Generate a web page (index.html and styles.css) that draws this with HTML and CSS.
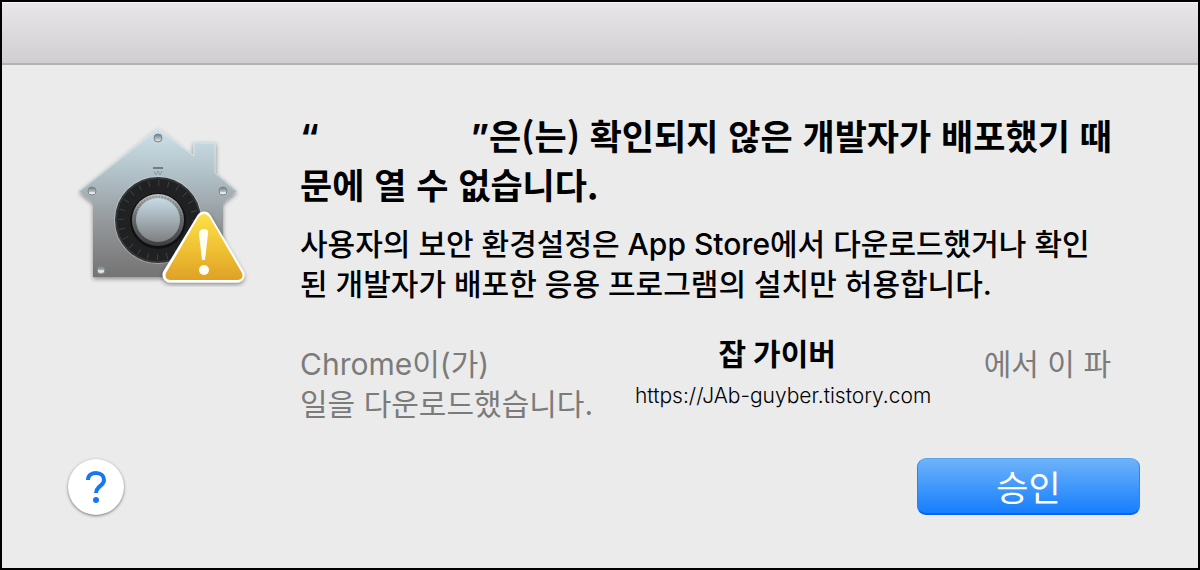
FILE: index.html
```html
<!DOCTYPE html>
<html lang="ko">
<head>
    <meta charset="UTF-8">
    <meta name="viewport" content="width=device-width, initial-scale=1.0">
    <title>승인</title>
    <link rel="stylesheet" href="styles.css">
</head>
<body>

<div class="dialog">
    <div class="titlebar"></div>

    <div class="content">
        <svg class="icon" width="184" height="180" viewBox="0 0 184 180" aria-hidden="true">
            <defs>
                <linearGradient id="house" x1="0" y1="0" x2="0" y2="1">
                    <stop offset="0" stop-color="#cfe3ea"/>
                    <stop offset="0.35" stop-color="#adbcc3"/>
                    <stop offset="0.65" stop-color="#929699"/>
                    <stop offset="1" stop-color="#757373"/>
                </linearGradient>
                <linearGradient id="knob" x1="0" y1="0" x2="0" y2="1">
                    <stop offset="0" stop-color="#c5dbe5"/>
                    <stop offset="0.5" stop-color="#a3aeb4"/>
                    <stop offset="1" stop-color="#7f7f80"/>
                </linearGradient>
                <linearGradient id="rim" x1="0" y1="0" x2="0" y2="1">
                    <stop offset="0" stop-color="#eef4f6"/>
                    <stop offset="0.4" stop-color="#8b9397"/>
                    <stop offset="1" stop-color="#484848"/>
                </linearGradient>
                <linearGradient id="warn" x1="0" y1="0" x2="0" y2="1">
                    <stop offset="0" stop-color="#fbe04a"/>
                    <stop offset="0.5" stop-color="#f0c334"/>
                    <stop offset="1" stop-color="#dfa126"/>
                </linearGradient>
                <linearGradient id="screw" x1="0" y1="0" x2="0" y2="1">
                    <stop offset="0" stop-color="#70797d"/>
                    <stop offset="0.5" stop-color="#a9b3b7"/>
                    <stop offset="1" stop-color="#f2f5f6"/>
                </linearGradient>
                <filter id="shadow" x="-20%" y="-20%" width="140%" height="140%">
                    <feDropShadow dx="0" dy="2" stdDeviation="2" flood-opacity="0.4"/>
                </filter>
            </defs>

            <!-- house plate -->
            <path d="M90 10L125 37V25Q125 24 126 24H147Q148 24 148 25V55L169 73L155 85V159H25V85L11 73Z" fill="url(#house)" filter="url(#shadow)"/>
            <path d="M12 73L90 11L126 38V25H147V55L168 73" fill="none" stroke="#e4f0f4" stroke-opacity="0.6"/>
            <g stroke="#7b8589">
                <circle cx="90" cy="20" r="4" fill="url(#screw)"/>
                <circle cx="24" cy="73" r="4" fill="url(#screw)"/>
                <circle cx="155" cy="73" r="4" fill="url(#screw)"/>
                <circle cx="33" cy="152" r="4" fill="url(#screw)"/>
            </g>
            <path d="M21 75H27M152 75H158M30 153H36" stroke="#fff" stroke-opacity="0.5" stroke-width="2"/>

            <!-- dial -->
            <path d="M85 50H95" stroke="#727c80" stroke-width="2"/>
            <path d="M86 53L88 57L90 53L92 57L94 53" fill="none" stroke="#8e999d"/>
            <circle cx="90" cy="102" r="44" fill="#d7e0e3" fill-opacity="0.4"/>
            <circle cx="90" cy="102" r="42" fill="#202122" stroke="#343638" stroke-width="2"/>
            <circle cx="90" cy="102" r="37" fill="none" stroke="#3f4243" stroke-width="6" stroke-dasharray="1 8.686"/>
            <circle cx="90" cy="103" r="28" fill="#111"/>
            <circle cx="90" cy="102" r="26" fill="url(#rim)" opacity="0.8"/>
            <circle cx="90" cy="102" r="23" fill="none" stroke="#46494b" stroke-opacity="0.3" stroke-width="3" stroke-dasharray="2 1"/>
            <circle cx="90" cy="102" r="22" fill="url(#knob)"/>

            <!-- warning triangle -->
            <path d="M136 101L169 157H102Z" fill="#fff" stroke="#fff" stroke-width="15" stroke-linejoin="round" filter="url(#shadow)"/>
            <path d="M136 96Q139 96 142 100L174 155Q176 161 170 162H102Q96 161 98 155L130 100Q133 96 136 96Z" fill="url(#warn)"/>
            <path d="M131 116Q131 111 136 111Q141 111 140 116L137 142H134Z" fill="#fffdf4"/>
            <circle cx="136" cy="152" r="5" fill="#fffdf4"/>
        </svg>

        <div class="message">
            <h1><span class="app-name"><span>“</span><span>”</span></span>은(는) 확인되지 않은 개발자가 배포했기 때<br>문에 열 수 없습니다.</h1>
            <p>사용자의 보안 환경설정은 App Store에서 다운로드했거나 확인<br>된 개발자가 배포한 응용 프로그램의 설치만 허용합니다.</p>
            <div class="source">
                <p class="source-line"><span>Chrome이(가)</span><span>에서 이 파</span></p>
                <p>일을 다운로드했습니다.</p>
                <div class="watermark">
                    <strong>잡 가이버</strong>
                    <a href="https://JAb-guyber.tistory.com">https://JAb-guyber.tistory.com</a>
                </div>
            </div>
        </div>
    </div>

    <div class="actions">
        <button type="button" class="help" aria-label="도움말">
            <svg width="24" height="34" viewBox="0 0 24 34" aria-hidden="true">
                <path d="M4 10C4 5 8 3 12 3C17 3 20 6 20 10C20 14 17 15 15 17C13 19 12 20 12 23" fill="none" stroke="#1478f5" stroke-width="4"/>
                <circle cx="12" cy="30" r="3" fill="#1478f5"/>
            </svg>
        </button>
        <button type="button" class="approve">승인</button>
    </div>
</div>

</body>
</html>
```

FILE: styles.css
```css
* {
    box-sizing: border-box;
}
body {
    margin: 0;
    font-family: Inter, "Noto Sans CJK KR", sans-serif;
    background-color: #ebebeb;
    color: #000;
}
.dialog {
    min-height: 100vh;
    border: 2px solid #000;
    background-color: #ebebeb;
}
.titlebar {
    height: 63px;
    background: linear-gradient(#e8e6e8, #d0ced0);
    border-top: 1px solid #f6f6f6;
    border-bottom: 2px solid #b3b1b3;
}
.content {
    display: flex;
    gap: 48px;
    padding: 45px 87px 0 66px;
}
.icon {
    flex: none;
    margin-top: 8px;
}
.message {
    flex: 1;
    min-width: 0;
}
h1 {
    margin: 0 0 16px;
    font-family: "Noto Sans CJK KR", sans-serif;
    font-size: 35px;
    line-height: 49px;
    font-weight: 700;
    white-space: nowrap;
}
.app-name {
    display: inline-flex;
    justify-content: space-between;
    width: 189px;
    font-family: Inter, sans-serif;
    line-height: 30px;
}
.message p {
    margin: 0;
    font-size: 30px;
    font-weight: 500;
    line-height: 40px;
    white-space: nowrap;
}
.source {
    position: relative;
    margin-top: 40px;
    color: #7b7b7b;
}
.message .source p {
    font-weight: 400;
}
.source-line {
    display: flex;
    justify-content: space-between;
}
/* sits over the download note */
.watermark {
    position: absolute;
    top: -12px;
    left: 335px;
    display: flex;
    flex-direction: column;
    align-items: center;
    color: #000;
    font-family: Inter, "Noto Sans CJK KR", sans-serif;
}
.watermark strong {
    padding-right: 12px;
    font-size: 30px;
    line-height: 44px;
}
.watermark a {
    color: #000;
    font-size: 21px;
    font-weight: 300;
    line-height: 40px;
    text-decoration: none;
}
.actions {
    display: flex;
    align-items: center;
    justify-content: space-between;
    padding: 34px 58px 0 66px;
}
button {
    border: none;
    padding: 0;
    cursor: pointer;
}
.help {
    display: flex;
    align-items: center;
    justify-content: center;
    width: 56px;
    height: 56px;
    border-radius: 50%;
    background-color: #fff;
    box-shadow: 0 1px 3px rgba(0, 0, 0, 0.5);
}
.approve {
    width: 223px;
    height: 57px;
    border: 1px solid #2d83f0;
    border-top-color: #5ba5ee;
    border-bottom: 2px solid #0a61f2;
    border-radius: 9px;
    background: linear-gradient(#6eb3f9, #167efd);
    color: #fff;
    font-family: "Noto Sans CJK KR", sans-serif;
    font-size: 35px;
    font-weight: 400;
    line-height: 50px;
}
```
